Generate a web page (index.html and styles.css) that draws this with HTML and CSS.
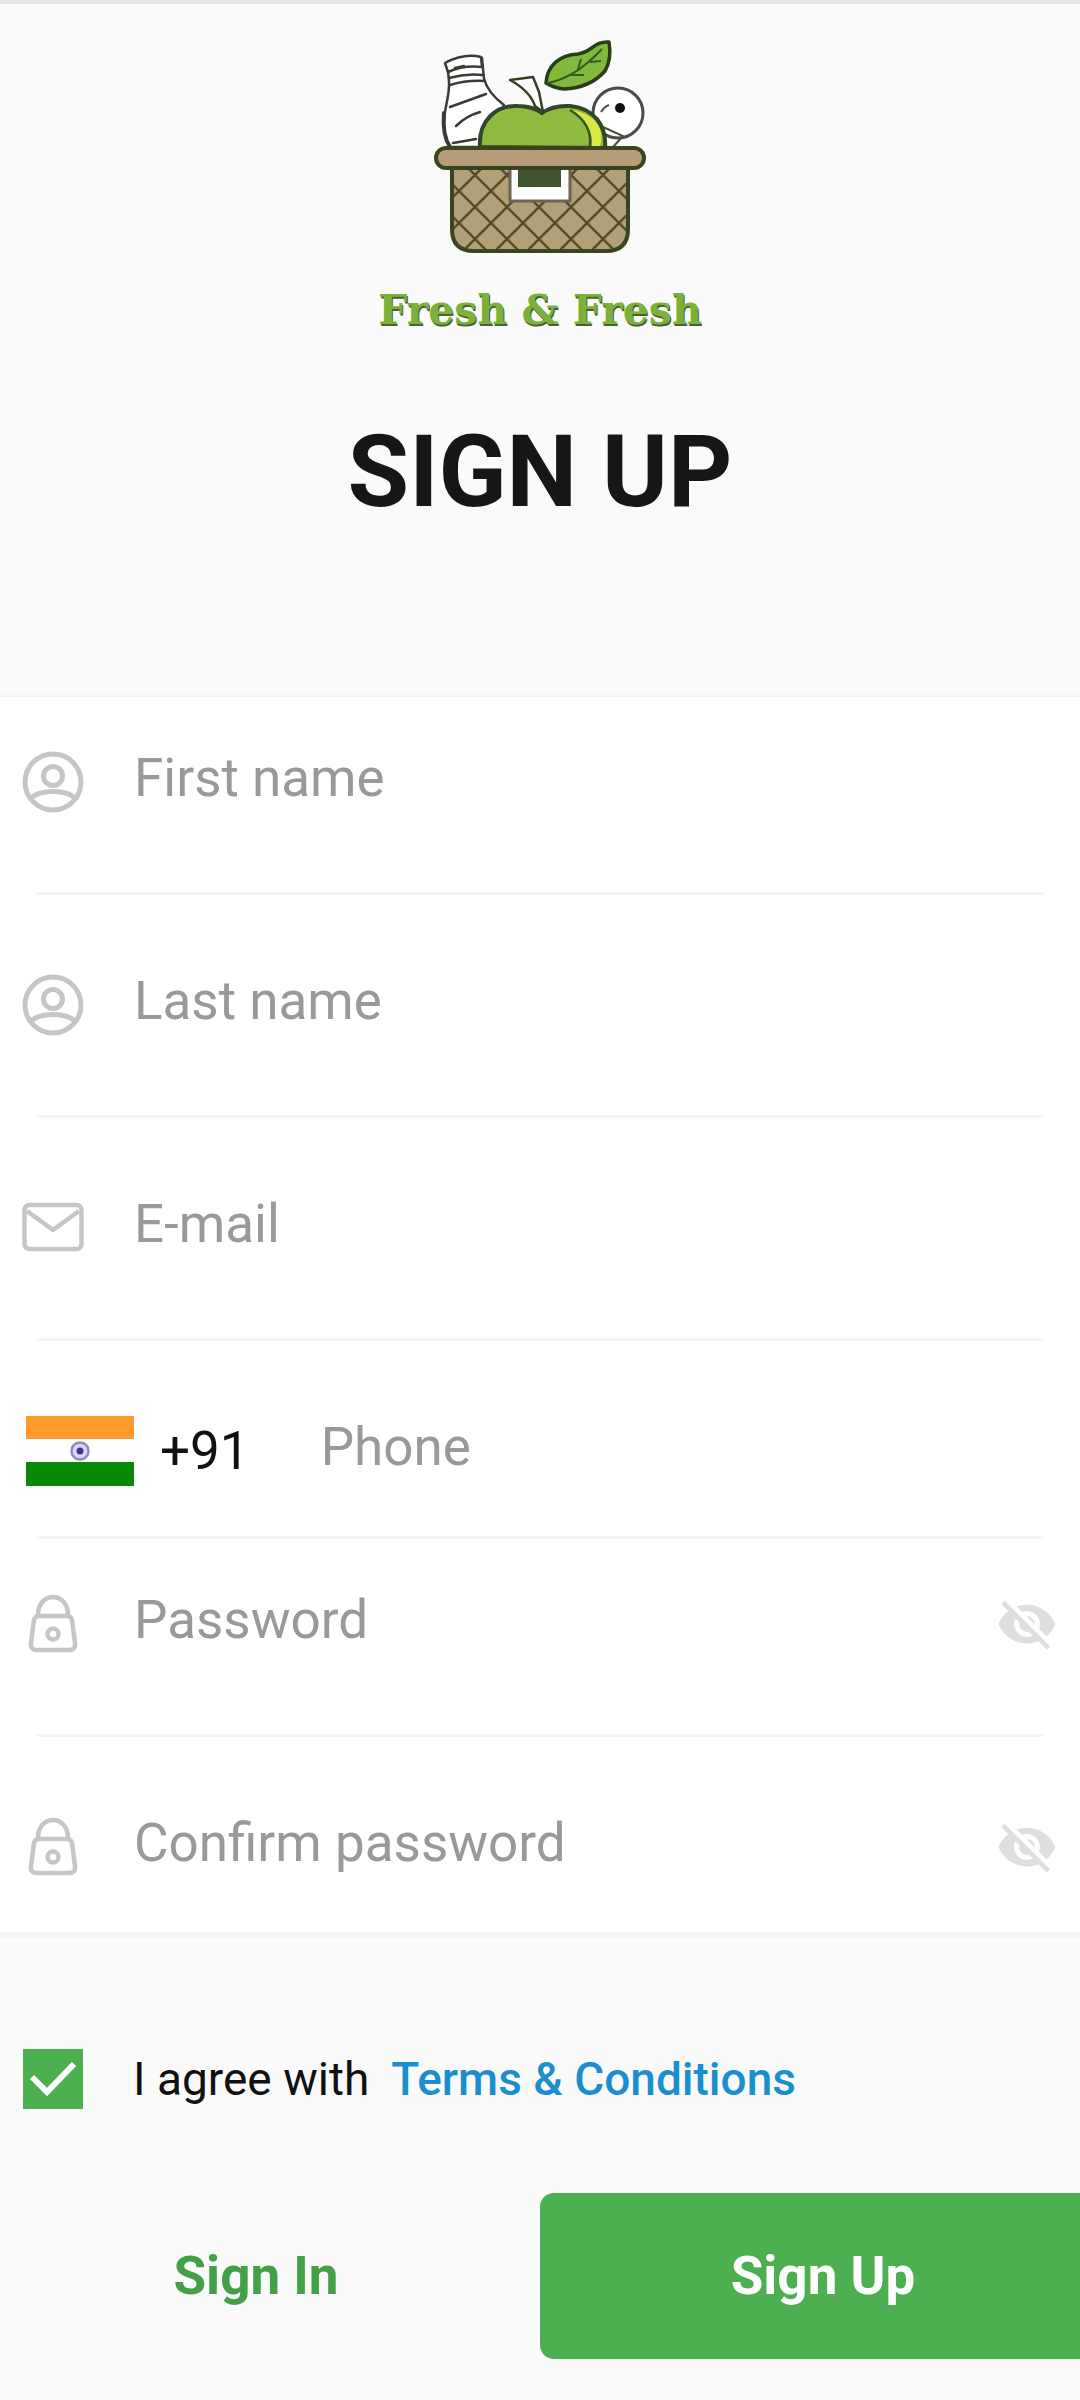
FILE: index.html
```html
<!DOCTYPE html>
<html lang="en">
<head>
  <meta charset="utf-8">
  <meta name="viewport" content="width=device-width, initial-scale=1">
  <title>Sign Up – Fresh &amp; Fresh</title>
  <link rel="stylesheet" href="styles.css">
</head>
<body>
  <svg class="sprite" aria-hidden="true">
    <defs>
      <symbol id="icon-person" viewBox="0 0 62 62">
        <g fill="none" stroke="currentColor" stroke-width="5">
          <circle cx="31" cy="31" r="28"/>
          <circle cx="31" cy="25" r="9.500"/>
          <path d="M9 48C14 38 48 38 53 48"/>
        </g>
      </symbol>
      <symbol id="icon-mail" viewBox="0 0 62 62">
        <g fill="none" stroke="currentColor" stroke-width="4.500" stroke-linejoin="round">
          <rect x="2.500" y="8" width="57" height="44" rx="5"/>
          <path d="M5 14L31 33L57 14"/>
        </g>
      </symbol>
      <symbol id="icon-lock" viewBox="0 0 62 62">
        <g fill="none" stroke="currentColor" stroke-width="4.500" stroke-linejoin="round">
          <path d="M16 22C16 -2 46 -2 46 22"/>
          <path d="M17 23H45Q49 23 50 27L53 50Q54 57 47 57H15Q8 57 9 50L12 27Q13 23 17 23Z"/>
          <circle cx="31" cy="41" r="5.500"/>
        </g>
      </symbol>
      <symbol id="icon-eye-off" viewBox="0 0 24 24">
        <path fill="currentColor" d="M12 7c2.760 0 5 2.240 5 5 0 .65-.13 1.260-.36 1.830l2.920 2.920c1.510-1.260 2.700-2.890 3.430-4.750-1.730-4.390-6-7.500-11-7.500-1.400 0-2.740.25-3.980.7l2.160 2.160C10.740 7.130 11.350 7 12 7zM2 4.270l2.280 2.280.46.46C3.080 8.300 1.780 10.020 1 12c1.730 4.390 6 7.500 11 7.500 1.550 0 3.030-.3 4.380-.84l.42.42L19.730 22 21 20.730 3.270 3 2 4.270zM7.530 9.800l1.550 1.550c-.05.21-.08.43-.08.65 0 1.660 1.340 3 3 3 .22 0 .44-.03.65-.08l1.550 1.550c-.67.33-1.410.53-2.200.53-2.760 0-5-2.240-5-5 0-.79.2-1.530.53-2.200zm4.310-.78l3.150 3.150.02-.16c0-1.660-1.340-3-3-3l-.17.01z"/>
      </symbol>
    </defs>
  </svg>

  <main class="page">
    <header class="header">
      <svg class="logo" viewBox="0 3 240 250" aria-hidden="true">
        <defs>
          <pattern id="weave" width="32" height="32" patternUnits="userSpaceOnUse" patternTransform="translate(39 158)">
            <path d="M0 0L32 32M32 0L0 32" stroke="#574d2a" stroke-width="2.500"/>
          </pattern>
        </defs>
        <!-- bottle -->
        <g fill="#fff" stroke="#3b3b36" stroke-width="2.500" stroke-linejoin="round" stroke-linecap="round">
          <path d="M29 80C30 96 24 106 24 122Q24 136 30 146L66 146L84 104Q68 92 64 78L62 57Q44 55 27 61Z"/>
          <path d="M25 62Q44 52 61 56L62 66Q44 64 28 71Z"/>
          <path d="M29 77Q46 72 63 74M30 84Q46 79 65 80M30 106L66 93M36 125Q46 115 60 111M33 142L56 138M35 67L44 65" fill="none"/>
          <path d="M24 112Q22 134 30 146" fill="none" stroke-width="4"/>
        </g>
        <!-- leaf -->
        <path d="M126 82C127 64 140 54 158 53C172 51 174 40 189 41Q192 58 185 70Q170 87 144 88Q134 87 126 82Z" fill="#82b83b" stroke="#263d18" stroke-width="3.500" stroke-linejoin="round"/>
        <path d="M127 82Q154 78 182 48M150 74L164 74M158 68L161 58M170 61L181 60" fill="none" stroke="#355b20" stroke-width="2"/>
        <!-- egg -->
        <circle cx="198" cy="112" r="25" fill="#fff" stroke="#4a4d45" stroke-width="3"/>
        <path d="M181 111Q184 106 189 104M183 126L203 135L193 146" fill="none" stroke="#4a4d45" stroke-width="2"/>
        <circle cx="200" cy="107" r="5" fill="#111"/>
        <!-- apple -->
        <path d="M60 146C58 119 77 104 98 105Q112 105 122 112Q133 104 150 105C173 107 187 124 185 147Z" fill="#8ebb3e" stroke="#33452a" stroke-width="4"/>
        <path d="M150 109C177 112 185 130 180 145H172C173 129 164 116 150 109Z" fill="#d7e944"/>
        <path d="M150 109C165 118 172 130 170 146" fill="none" stroke="#37551e" stroke-width="2.500"/>
        <path d="M90 79L113 76L119 91L123 111L115 105Q110 90 90 79Z" fill="#fff" stroke="#354027" stroke-width="2.500" stroke-linejoin="round"/>
        <!-- basket -->
        <path d="M32 165H208V228Q208 250 186 250H54Q32 250 32 228Z" fill="#b39f78"/>
        <path d="M32 165H208V228Q208 250 186 250H54Q32 250 32 228Z" fill="url(#weave)" stroke="#39451f" stroke-width="4"/>
        <path d="M90 166V200H150V166" fill="#fff" stroke="#6b6651" stroke-width="3"/>
        <rect x="98" y="167" width="43" height="19" fill="#3e5530"/>
        <rect x="16" y="147" width="208" height="20" rx="10" fill="#b89c77" stroke="#39451f" stroke-width="4"/>
      </svg>
      <p class="brand">Fresh &amp; Fresh</p>
      <h1 class="title">SIGN UP</h1>
    </header>

    <form class="form" id="signup">
      <div class="fields">
        <div class="row row--tight-top">
          <div class="field">
            <label class="icon" for="first" aria-label="First name"><svg><use href="#icon-person"/></svg></label>
            <input class="input" id="first" type="text" placeholder="First name">
          </div>
        </div>
        <div class="row">
          <div class="field">
            <label class="icon" for="last" aria-label="Last name"><svg><use href="#icon-person"/></svg></label>
            <input class="input" id="last" type="text" placeholder="Last name">
          </div>
        </div>
        <div class="row">
          <div class="field">
            <label class="icon" for="email" aria-label="E-mail"><svg><use href="#icon-mail"/></svg></label>
            <input class="input" id="email" type="email" placeholder="E-mail">
          </div>
        </div>
        <div class="row row--tight-bottom">
          <div class="field field--phone">
            <button class="country" type="button" aria-label="Country code +91">
              <svg class="flag" viewBox="0 0 108 72" aria-hidden="true">
                <path fill="#ff9a2e" d="M0 1H108V24H0Z"/>
                <path fill="#fff" d="M0 24H108V48H0Z"/>
                <path fill="#088a08" d="M0 47H108V71H0Z"/>
                <circle cx="54" cy="36" r="8.500" fill="#dcd8f2" stroke="#8f88cc" stroke-width="2.500"/>
                <circle cx="54" cy="36" r="3.500" fill="#3b329a"/>
              </svg>
              <span>+91</span>
            </button>
            <input class="input" id="phone" type="tel" placeholder="Phone" aria-label="Phone">
          </div>
        </div>
        <div class="row row--tight-top">
          <div class="field">
            <label class="icon" for="password" aria-label="Password"><svg><use href="#icon-lock"/></svg></label>
            <input class="input" id="password" type="password" placeholder="Password">
            <button class="reveal" type="button" aria-label="Show password"><svg><use href="#icon-eye-off"/></svg></button>
          </div>
        </div>
        <div class="row row--tight-bottom">
          <div class="field">
            <label class="icon" for="confirm" aria-label="Confirm password"><svg><use href="#icon-lock"/></svg></label>
            <input class="input" id="confirm" type="password" placeholder="Confirm password">
            <button class="reveal" type="button" aria-label="Show confirmed password"><svg><use href="#icon-eye-off"/></svg></button>
          </div>
        </div>
      </div>

      <div class="agree">
        <input class="checkbox" id="agree" type="checkbox" checked>
        <p class="agree-text"><label for="agree">I agree with</label> <a class="terms" href="#terms">Terms &amp; Conditions</a></p>
      </div>

      <div class="actions">
        <button class="btn btn--text" type="button">Sign In</button>
        <button class="btn btn--primary" type="submit">Sign Up</button>
      </div>
    </form>
  </main>
</body>
</html>
```
FILE: styles.css
```css
:root {
  --green: #4caf50;
  --line: #f4f4f4;
  --space-s: 53px;
  --space-l: 78px;
}

* {
  box-sizing: border-box;
}

body {
  margin: 0;
  background: #fafafa;
  color: #111;
  font-family: Roboto, "Liberation Sans", sans-serif;
}

button,
input {
  margin: 0;
  padding: 0;
  border: 0;
  background: none;
  color: inherit;
  font: inherit;
}

svg {
  display: block;
}

.sprite {
  display: none;
}

.page {
  border-top: 4px solid #e6e6e6;
}

/* Header */
.header {
  display: flex;
  flex-direction: column;
  align-items: center;
  padding-bottom: 165px;
  border-bottom: 4px solid #f5f5f5;
}

.logo {
  width: 240px;
  height: 250px;
}

.brand {
  margin: 34px 0 0;
  color: #7cb03a;
  font: bold 41px/44px "DejaVu Serif", serif;
  text-shadow: 1px 2px 0 #44652a;
}

.title {
  margin: 84px 0 0;
  color: #161616;
  font-size: 100px;
  font-weight: 700;
  line-height: 112px;
}

/* Fields */
.fields {
  background: #fff;
  border-bottom: 6px solid #f5f5f5;
}

.row + .row::before {
  content: "";
  display: block;
  height: 3px;
  margin: 0 37px;
  background: var(--line);
}

.field {
  display: flex;
  align-items: center;
  gap: 50px;
  padding: var(--space-l) 22px;
}

.row--tight-top .field {
  padding-top: var(--space-s);
}

.row--tight-bottom .field {
  padding-bottom: var(--space-s);
}

.icon {
  flex: none;
  color: #c6c6c6;
}

.icon svg {
  width: 62px;
  height: 62px;
}

.input {
  flex: 1;
  min-width: 0;
  height: 64px;
  padding-bottom: 8px;
  outline: 0;
  font-size: 53px;
}

.input::placeholder {
  color: #999;
  opacity: 1;
}

.field--phone {
  gap: 71px;
  padding-left: 26px;
}

.country {
  display: flex;
  align-items: center;
  gap: 26px;
  height: 64px;
  font-size: 53px;
}

.flag {
  width: 108px;
  height: 72px;
}

.reveal {
  flex: none;
  color: #dedede;
}

.reveal svg {
  width: 62px;
  height: 62px;
}

/* Terms */
.agree {
  display: flex;
  align-items: center;
  gap: 50px;
  padding: 111px 23px 84px;
}

.checkbox {
  flex: none;
  width: 60px;
  height: 60px;
  appearance: none;
  background: var(--green);
}

.checkbox:checked {
  background: var(--green) url("data:image/svg+xml,%3Csvg xmlns='http://www.w3.org/2000/svg' viewBox='0 0 60 60'%3E%3Cpath d='M9 28L24 43L51 15' fill='none' stroke='white' stroke-width='6'/%3E%3C/svg%3E") center / contain;
}

.agree-text {
  display: flex;
  gap: 22px;
  margin: 0;
  font-size: 46px;
  line-height: 56px;
}

.terms {
  color: #1b8fcd;
  font-weight: 500;
  text-decoration: none;
}

/* Actions */
.actions {
  display: grid;
  grid-template-columns: 1fr 1fr;
  padding-bottom: 40px;
}

.btn {
  height: 166px;
  font-size: 53px;
  font-weight: 700;
}

.btn--text {
  padding-right: 28px;
  color: #43a047;
}

.btn--primary {
  padding-left: 26px;
  border-radius: 14px 0 0 14px;
  background: var(--green);
  color: #fff;
}
```
